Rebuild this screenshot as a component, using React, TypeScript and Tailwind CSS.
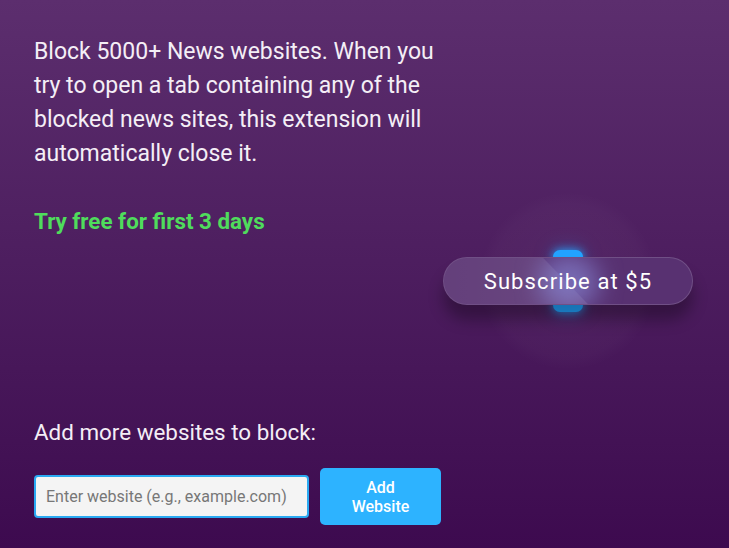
import { useState } from "react";

export default function App() {
  const [site, setSite] = useState("");

  return (
    <div className="min-h-[548px] w-full bg-gradient-to-b from-[#5c2e6e] to-[#3d0a4f] font-['Roboto',sans-serif] text-white">
      <div className="flex px-[34px] pt-[35px]">
        <div className="w-[400px] shrink-0">
          <p className="text-[23px] leading-[34px] text-[#f4eef6]">
            Block 5000+ News websites. When you try to open a tab containing any of the blocked news sites, this
            extension will automatically close it.
          </p>
          <p className="mt-[33px] text-[22.4px] font-bold leading-[34px] text-[#4fdc5c]">Try free for first 3 days</p>
        </div>

        <div className="relative ml-[9px] mt-[222px]">
          <div className="pointer-events-none absolute left-1/2 top-1/2 h-[180px] w-[180px] -translate-x-1/2 -translate-y-1/2 rounded-full bg-[radial-gradient(circle,rgba(255,255,255,0.04)_0%,rgba(255,255,255,0.02)_60%,transparent_70%)]" />
          {/* glowing bar stubs peeking out above and below the glass button */}
          <div className="absolute left-[110px] top-[-7px] h-[14px] w-[30px] rounded-[7px] bg-[#22a3ff] shadow-[0_0_10px_#22a3ff,0_0_22px_#22a3ff55]" />
          <div className="absolute bottom-[-7px] left-[110px] h-[14px] w-[30px] rounded-[7px] bg-[#22a3ff] shadow-[0_0_10px_#22a3ff,0_0_22px_#22a3ff55]" />
          <button className="relative flex h-[48px] w-[250px] items-center justify-center overflow-hidden rounded-full border border-white/15 bg-[#583171] text-[22px] tracking-[1.1px] text-white shadow-[0_15px_15px_rgba(0,0,0,0.3)]">
            <span className="absolute inset-0 bg-[linear-gradient(90deg,rgba(255,255,255,0.07),rgba(255,255,255,0.14))] [clip-path:polygon(0_0,40%_0,58%_100%,0_100%)]" />
            <span className="absolute left-[95px] top-[-4px] h-[56px] w-[60px] rounded-full bg-[#8c90e0]/60 blur-[12px]" />
            <span className="relative">Subscribe at $5</span>
          </button>
        </div>
      </div>

      <div className="px-[34px] pt-[110px]">
        <p className="text-[22.4px] leading-[34px] text-[#f4eef6]">Add more websites to block:</p>
        <div className="mt-[19px] flex items-center gap-[11px]">
          <input
            value={site}
            onChange={(e) => setSite(e.target.value)}
            placeholder="Enter website (e.g., example.com)"
            className="h-[43px] w-[275px] rounded-[4px] border-2 border-[#2aa9f2] bg-[#f4f4f4] px-[10px] text-[16px] text-gray-800 outline-none placeholder:text-[#777]"
          />
          <button className="h-[57px] w-[121px] rounded-[5px] bg-[#2db3ff] px-2 text-[16px] font-medium leading-[19px] text-white">
            Add
            <br />
            Website
          </button>
        </div>
      </div>
    </div>
  );
}
